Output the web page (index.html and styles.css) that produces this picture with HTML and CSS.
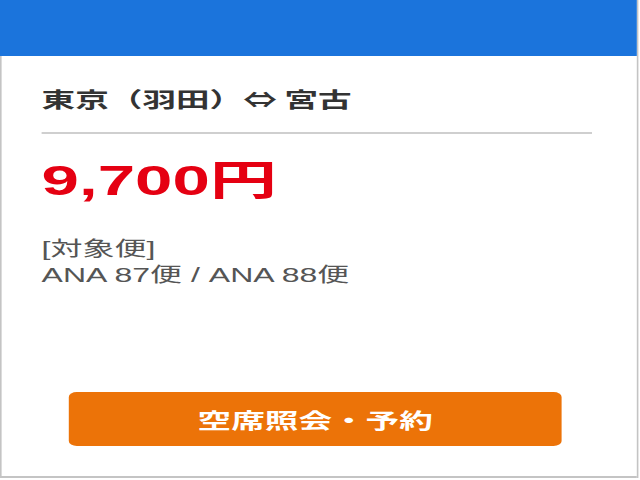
FILE: index.html
```html
<!DOCTYPE html>
<html lang="ja">
<head>
    <meta charset="UTF-8">
    <meta name="viewport" content="width=device-width, initial-scale=1.0">
    <title>東京（羽田）⇔ 宮古</title>
    <link rel="stylesheet" href="styles.css">
</head>
<body>

<div class="page">
    <div class="fare-card">
        <div class="fare-head"></div>

        <div class="fare-body">
            <h2 class="route">東京（羽田）⇔ 宮古</h2>
            <div class="price">9,700円</div>

            <div class="flights">
                <p>[対象便]</p>
                <p>ANA 87便 / ANA 88便</p>
            </div>

            <a class="book-btn" href="#">空席照会・予約</a>
        </div>
    </div>
</div>

</body>
</html>
```

FILE: styles.css
```css
body {
    margin: 0;
    padding: 0;
    background-color: #fff;
    font-family: "Liberation Sans", "Noto Sans CJK JP", sans-serif;
    color: #333;
    overflow: hidden;
}
/* the screen is a 400px phone layout shown stretched across 640px */
.page {
    width: 400px;
    height: 480px;
    transform: scaleX(1.6);
    transform-origin: 0 0;
}
.fare-card {
    width: 398px;
    border-right: 1px solid #c4c4c4;
}
.fare-head {
    height: 56px;
    background-color: #1b74dc;
}
.fare-body {
    display: flex;
    flex-direction: column;
    height: 422px;
    padding: 26px 28px 30px 25px;
    box-sizing: border-box;
    border-left: 1px solid #c4c4c4;
    border-bottom: 2px solid #c4c4c4;
}
.route {
    margin: 0;
    padding-bottom: 18px;
    border-bottom: 2px solid #cfcfcf;
    font-family: "Noto Sans CJK JP", sans-serif;
    font-size: 21px;
    line-height: 32px;
    font-weight: bold;
    color: #333;
}
.price {
    margin-top: 23px;
    font-size: 42px;
    line-height: 48px;
    font-weight: bold;
    color: #e50012;
}
.flights {
    margin-top: 31px;
    font-size: 20px;
    line-height: 26px;
    color: #555;
}
.flights p {
    margin: 0;
}
.book-btn {
    display: block;
    width: 308px;
    height: 54px;
    margin: auto 0 0 17px;
    border-radius: 5px;
    background-color: #ec7308;
    color: #fff;
    text-align: center;
    text-decoration: none;
    font-family: "Noto Sans CJK JP", sans-serif;
    font-size: 21px;
    font-weight: bold;
    line-height: 54px;
}
```
